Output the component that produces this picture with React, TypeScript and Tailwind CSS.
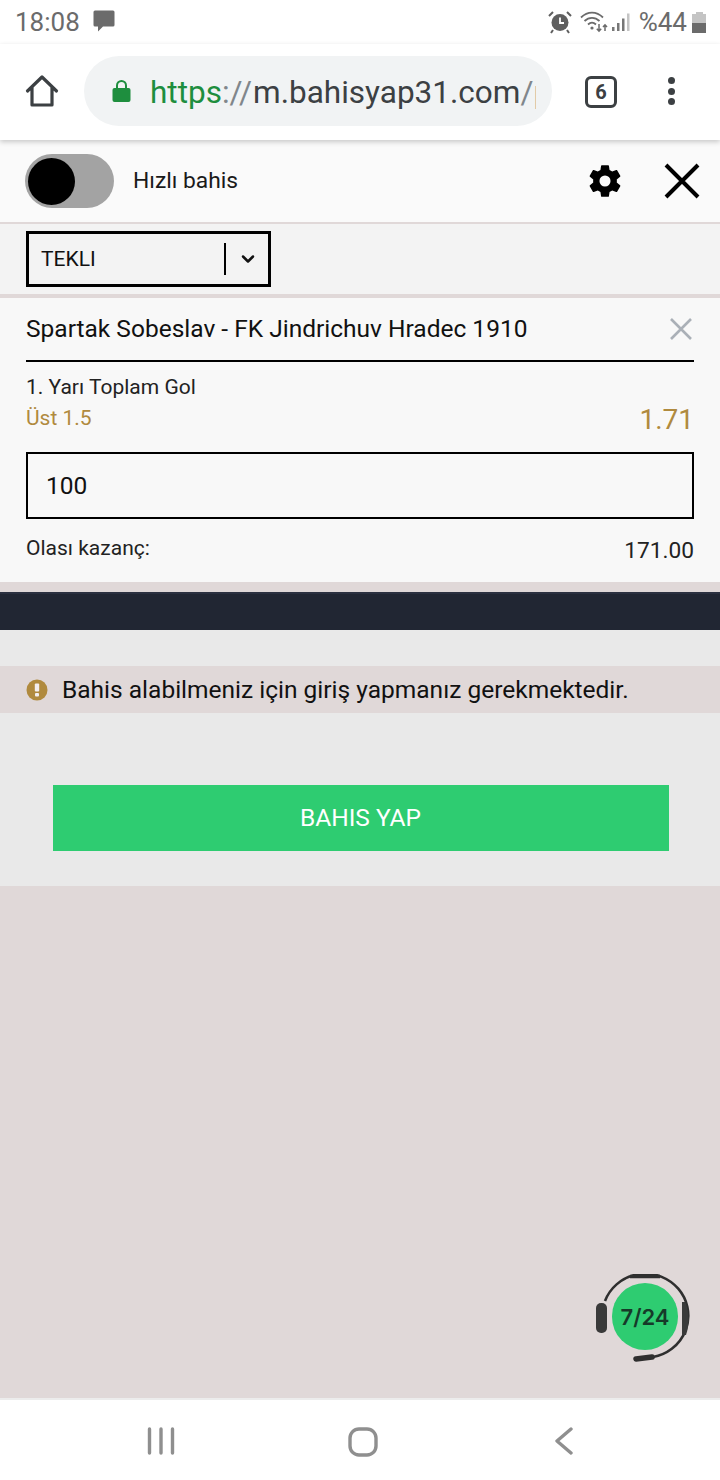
import { ChevronDown } from "lucide-react";

const font = { fontFamily: "Roboto, sans-serif" };

function StatusBar() {
  return (
    <div className="flex h-[44px] items-center justify-between pl-[15px] pr-[14px] text-[#6b6b6b]">
      <div className="flex items-center gap-[12px]">
        <span className="text-[26px] leading-none">18:08</span>
        <svg width="24" height="24" viewBox="0 0 24 24" className="mt-[-2px]">
          <path d="M3 1.500h18a1.500 1.500 0 0 1 1.500 1.500v13a1.500 1.500 0 0 1-1.500 1.500H11l-5 5v-5H3A1.500 1.500 0 0 1 1.500 16V3A1.500 1.500 0 0 1 3 1.500z" fill="#6b6b6b" />
        </svg>
      </div>
      <div className="flex items-center">
        <svg width="24" height="24" viewBox="0 0 24 24" className="mr-[8px]">
          <circle cx="12" cy="12.500" r="8.500" fill="#5f5f5f" />
          <path d="M12 7.500v5.500h4" stroke="#fff" strokeWidth="1.800" fill="none" />
          <path d="M1 6l4-4M23 6l-4-4M5 20l-2 3M19 20l2 3" stroke="#5f5f5f" strokeWidth="2" />
        </svg>
        <svg width="29" height="24" viewBox="0 0 29 24" className="mr-[2px]">
          <path d="M1 7.500C7.500 1 16.500 1 23 7.500M4.500 11c4.500-4.300 10.500-4.300 15 0M8 14.500c2.500-2.300 5.500-2.300 8 0" stroke="#6b6b6b" strokeWidth="1.800" fill="none" />
          <circle cx="12" cy="18" r="1.600" fill="#6b6b6b" />
          <path d="M19 14v7M16.800 18.800l2.200 2.400 2.200-2.400M25 21v-6M23 17l2-2.200 2 2.200" stroke="#6b6b6b" strokeWidth="1.500" fill="none" />
        </svg>
        <svg width="20" height="24" viewBox="0 0 20 24" className="mr-[8px]">
          <rect x="1" y="17" width="2.500" height="4" fill="#777" />
          <rect x="6" y="13" width="2.500" height="8" fill="#777" />
          <rect x="11" y="8.500" width="2.500" height="12.500" fill="#777" />
          <rect x="16" y="3.500" width="2.500" height="17.500" fill="#c4c4c4" />
        </svg>
        <span className="text-[26px] leading-none">%44</span>
        <div className="ml-[5px] flex h-[21px] w-[14px] flex-col">
          <div className="mx-auto h-[2px] w-[7px] bg-[#c4c4c4]" />
          <div className="h-[9px] bg-[#c4c4c4]" />
          <div className="h-[10px] bg-[#6b6b6b]" />
        </div>
      </div>
    </div>
  );
}

function ChromeBar() {
  return (
    <div className="relative z-10 flex h-[96px] items-start pl-[25px] pt-[12px] shadow-[0_2px_5px_rgba(0,0,0,0.2)]">
      <svg width="34" height="34" viewBox="0 0 34 34" className="mt-[18px]">
        <path d="M2.500 17L17 3l14.500 14M7 13.500V31h20V13.500" stroke="#3c4043" strokeWidth="3.200" fill="none" strokeLinejoin="round" strokeLinecap="round" />
      </svg>
      <div className="ml-[25px] flex h-[70px] w-[468px] items-center rounded-[35px] bg-[#f1f3f4] pl-[28px]">
        <svg width="19" height="24" viewBox="0 0 19 24" className="shrink-0">
          <path d="M5 10V6.500a4.500 4.500 0 0 1 9 0V10" stroke="#1e8e3e" strokeWidth="2" fill="none" />
          <rect x="0.500" y="9" width="18" height="14" rx="2" fill="#1e8e3e" />
        </svg>
        <div className="ml-[19px] mt-[4px] w-[386px] overflow-hidden whitespace-nowrap text-[31.500px] leading-none">
          <span className="text-[#1e8e3e]">https</span>
          <span className="text-[#80868b]">://</span>
          <span className="ml-[1px] text-[#3c4043]">m.bahisyap31.com</span>
          <span className="text-[#80868b]">/p</span>
        </div>
      </div>
      <div className="ml-[33px] mt-[20px] flex h-[32px] w-[32px] items-center justify-center rounded-[6px] border-[3px] border-[#3c4043] text-[20px] font-bold leading-none text-[#3c4043]">
        6
      </div>
      <div className="ml-[51px] mt-[21px] flex flex-col gap-[3.500px]">
        <div className="h-[7px] w-[7px] rounded-full bg-[#3c4043]" />
        <div className="h-[7px] w-[7px] rounded-full bg-[#3c4043]" />
        <div className="h-[7px] w-[7px] rounded-full bg-[#3c4043]" />
      </div>
    </div>
  );
}

function BetHeader() {
  return (
    <div className="flex h-[84px] items-center border-b-2 border-[#e0d8d8] bg-[#fafafa] pl-[25px] pr-[20px]">
      <div className="flex h-[54px] w-[89px] items-center rounded-[27px] bg-[#a3a3a3] pl-[3px]">
        <div className="h-[47px] w-[47px] rounded-full bg-black" />
      </div>
      <span className="ml-[19px] text-[22.800px] leading-none text-[#1a1a1a]">Hızlı bahis</span>
      <svg width="38" height="38" viewBox="0 0 24 24" className="ml-auto mr-[40px]">
        <path
          fillRule="evenodd"
          d="M19.430 12.980c.040-.320.070-.640.070-.980s-.030-.660-.070-.980l2.110-1.650c.190-.150.240-.420.120-.640l-2-3.460c-.120-.220-.390-.300-.610-.220l-2.490 1c-.520-.400-1.080-.730-1.690-.980l-.380-2.650A.488.488 0 0 0 14 2h-4c-.250 0-.460.180-.490.420l-.380 2.650c-.610.250-1.170.590-1.690.980l-2.490-1c-.230-.090-.490 0-.610.220l-2 3.460c-.130.220-.070.490.120.640l2.110 1.650c-.040.320-.070.650-.070.980s.030.660.070.980l-2.110 1.650c-.190.150-.240.420-.120.640l2 3.460c.120.220.390.300.610.220l2.490-1c.520.400 1.080.730 1.690.980l.380 2.650c.030.240.240.420.490.420h4c.250 0 .460-.180.490-.420l.380-2.650c.610-.250 1.170-.590 1.690-.980l2.490 1c.230.090.490 0 .610-.220l2-3.460c.120-.220.070-.490-.120-.640l-2.110-1.650zM12 15.500a3.500 3.500 0 1 1 0-7 3.500 3.500 0 0 1 0 7z"
          fill="#000"
        />
      </svg>
      <svg width="36" height="36" viewBox="0 0 36 36">
        <path d="M2 2l32 32M34 2L2 34" stroke="#000" strokeWidth="4" />
      </svg>
    </div>
  );
}

function BetCard() {
  return (
    <div className="bg-[#f8f8f8] px-[26px] pb-[19px]">
      <div className="relative flex h-[64px] items-center border-b-2 border-black text-[24.500px] leading-none text-[#111]">
        Spartak Sobeslav - FK Jindrichuv Hradec 1910
        <svg width="22" height="22" viewBox="0 0 22 22" className="absolute right-[2px] top-[20px]">
          <path d="M1 1l20 20M21 1L1 21" stroke="#aab0b7" strokeWidth="2.600" />
        </svg>
      </div>
      <div className="mt-[14px] text-[21px] leading-[23px] text-[#222]">1. Yarı Toplam Gol</div>
      <div className="mt-[7px] flex items-start justify-between">
        <span className="text-[21px] leading-[24px] text-[#b08a3e]">Üst 1.5</span>
        <span className="mt-[-2px] text-[28px] leading-[32px] text-[#b08a3e]">1.71</span>
      </div>
      <div className="mt-[16px] flex h-[67px] items-center border-2 border-black pl-[18px] pt-[1px] text-[24.500px] text-[#111]">100</div>
      <div className="mt-[17px] flex items-start justify-between text-[#222]">
        <span className="text-[21px] leading-[24px]">Olası kazanç:</span>
        <span className="mt-[3px] text-[22.700px] leading-[24px]">171.00</span>
      </div>
    </div>
  );
}

function SupportBadge() {
  return (
    <div className="absolute left-[595px] top-[1274px] h-[90px] w-[96px]">
      <svg width="96" height="90" viewBox="0 0 96 90" className="absolute left-0 top-0">
        <path d="M10 27A43 42 0 1 1 58 83" stroke="#2f2f2f" strokeWidth="2.600" fill="none" />
        <path d="M35 2.500h30" stroke="#2f2f2f" strokeWidth="3.500" />
        <rect x="1" y="29" width="11" height="30" rx="5" fill="#3a3a3a" />
        <path d="M90 28c4 8 5 22 1 33l-4 0 0-33z" fill="#3a3a3a" />
        <path d="M41 85l16-2" stroke="#2f2f2f" strokeWidth="5.500" strokeLinecap="round" />
      </svg>
      <div className="absolute left-[17px] top-[9px] flex h-[67px] w-[66px] items-center justify-center rounded-full bg-[#2ecc71] text-[22px] font-semibold leading-none text-[#163a29]" style={{ fontFamily: "Inter, sans-serif" }}>
        7/24
      </div>
    </div>
  );
}

export default function App() {
  return (
    <div className="relative flex h-[1480px] w-[720px] flex-col overflow-hidden bg-white" style={font}>
      <StatusBar />
      <ChromeBar />
      <BetHeader />
      <div className="flex h-[74px] items-start border-b-[4px] border-[#e0d8d8] bg-[#f3f3f3] pl-[26px] pt-[7px]">
        <div className="flex h-[56px] w-[245px] items-center border-[3px] border-black pl-[12px] text-[21px] leading-none text-[#111]">
          TEKLI
          <div className="ml-auto h-[32px] w-[2px] bg-black" />
          <ChevronDown className="ml-[12px] mr-[10px]" size={20} strokeWidth={3} color="#111" />
        </div>
      </div>
      <BetCard />
      <div className="h-[10px] bg-[#e0d8d8]" />
      <div className="h-[38px] border-t-2 border-[#2b3040] bg-[#212633]" />
      <div className="h-[36px] bg-[#e9e9e9]" />
      <div className="flex h-[47px] items-center bg-[#e0d8d8] pl-[26px]">
        <svg width="22" height="22" viewBox="0 0 22 22">
          <circle cx="11" cy="11" r="10.500" fill="#b08a3e" />
          <rect x="8.800" y="4.500" width="4.400" height="8" rx="1" fill="#f3eeee" />
          <rect x="9" y="14" width="4" height="3.600" rx="1" fill="#f3eeee" />
        </svg>
        <span className="ml-[14px] mt-[2px] text-[24.500px] leading-none text-[#111]">Bahis alabilmeniz için giriş yapmanız gerekmektedir.</span>
      </div>
      <div className="h-[173px] bg-[#e9e9e9] pl-[53px] pt-[72px]">
        <div className="flex h-[66px] w-[616px] items-center justify-center bg-[#2ecc71] pr-[1px] text-[24.500px] leading-none text-white">BAHIS YAP</div>
      </div>
      <div className="flex-1 bg-[#e0d8d8]" />
      <div className="flex h-[82px] items-start border-t-2 border-[#ececec] bg-white pl-[147px] pt-[27px]">
        <svg width="29" height="28" viewBox="0 0 29 28">
          <path d="M2.500 2v24M14 2v24M25.500 2v24" stroke="#8f8f8f" strokeWidth="3.400" strokeLinecap="round" />
        </svg>
        <svg width="30" height="30" viewBox="0 0 30 30" className="ml-[172px]">
          <rect x="2" y="2" width="26" height="26" rx="9" stroke="#8f8f8f" strokeWidth="3.400" fill="none" />
        </svg>
        <svg width="20" height="28" viewBox="0 0 20 28" className="ml-[176px]">
          <path d="M17 2L3 14l14 12" stroke="#8f8f8f" strokeWidth="3.400" strokeLinecap="round" strokeLinejoin="round" fill="none" />
        </svg>
      </div>
      <SupportBadge />
    </div>
  );
}
